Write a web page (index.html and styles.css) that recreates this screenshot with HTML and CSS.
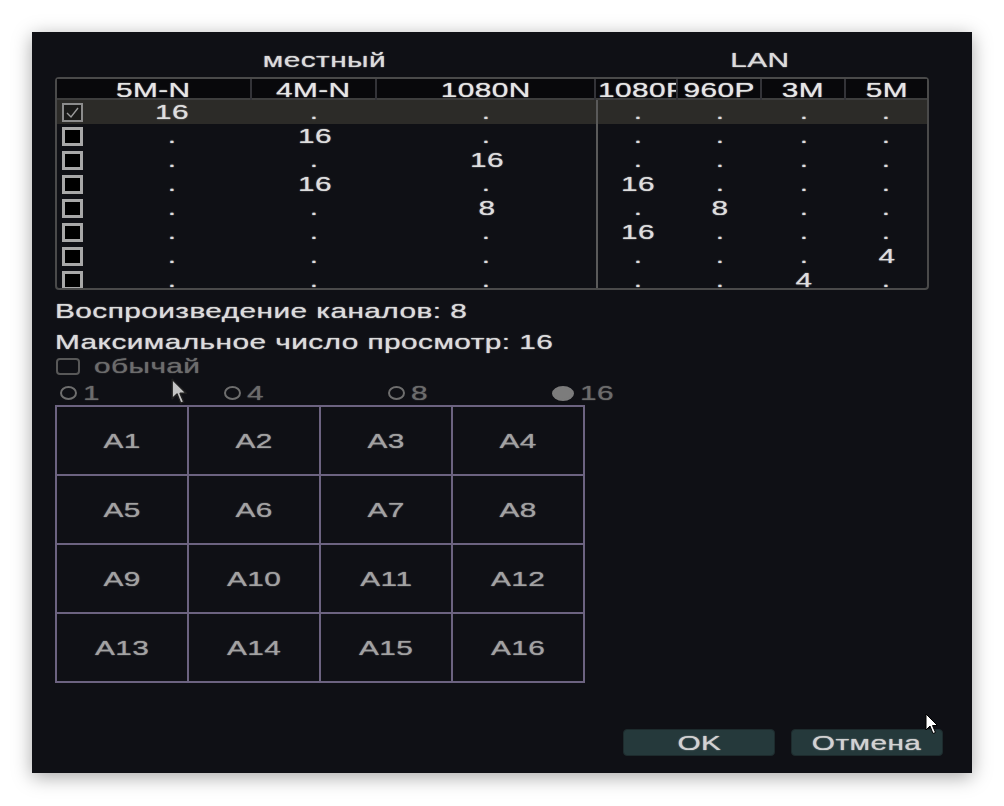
FILE: index.html
```html
<!DOCTYPE html>
<html lang="ru">
<head>
<meta charset="utf-8">
<title>Настройки каналов</title>
<link rel="stylesheet" href="styles.css">
</head>
<body>
<div class="panel">
  <div class="groups">
    <div class="grp grp-local"><span class="s">местный</span></div>
    <div class="grp grp-lan"><span class="s">LAN</span></div>
  </div>

  <div class="table">
    <div class="thead">
      <div class="th"><span class="s">5M-N</span></div>
      <div class="th"><span class="s">4M-N</span></div>
      <div class="th"><span class="s">1080N</span></div>
      <div class="th th-clip"><span class="s sl">1080P</span></div>
      <div class="th"><span class="s">960P</span></div>
      <div class="th"><span class="s">3M</span></div>
      <div class="th th-last"><span class="s">5M</span></div>
    </div>
    <div class="tbody">
      <div class="tr sel">
        <div class="td first"><span class="cb"><svg viewBox="0 0 15 13" width="15" height="13"><polyline points="2,7 6,11 13,2" fill="none" stroke="#9a9a9a" stroke-width="1.4"/></svg></span><span class="v"><span class="s">16</span></span></div>
        <div class="td"><span class="s">.</span></div>
        <div class="td"><span class="s">.</span></div>
        <div class="td lan"><span class="s">.</span></div>
        <div class="td"><span class="s">.</span></div>
        <div class="td"><span class="s">.</span></div>
        <div class="td"><span class="s">.</span></div>
      </div>
      <div class="tr">
        <div class="td first"><span class="cb"></span><span class="v"><span class="s">.</span></span></div>
        <div class="td"><span class="s">16</span></div>
        <div class="td"><span class="s">.</span></div>
        <div class="td lan"><span class="s">.</span></div>
        <div class="td"><span class="s">.</span></div>
        <div class="td"><span class="s">.</span></div>
        <div class="td"><span class="s">.</span></div>
      </div>
      <div class="tr">
        <div class="td first"><span class="cb"></span><span class="v"><span class="s">.</span></span></div>
        <div class="td"><span class="s">.</span></div>
        <div class="td"><span class="s">16</span></div>
        <div class="td lan"><span class="s">.</span></div>
        <div class="td"><span class="s">.</span></div>
        <div class="td"><span class="s">.</span></div>
        <div class="td"><span class="s">.</span></div>
      </div>
      <div class="tr">
        <div class="td first"><span class="cb"></span><span class="v"><span class="s">.</span></span></div>
        <div class="td"><span class="s">16</span></div>
        <div class="td"><span class="s">.</span></div>
        <div class="td lan"><span class="s">16</span></div>
        <div class="td"><span class="s">.</span></div>
        <div class="td"><span class="s">.</span></div>
        <div class="td"><span class="s">.</span></div>
      </div>
      <div class="tr">
        <div class="td first"><span class="cb"></span><span class="v"><span class="s">.</span></span></div>
        <div class="td"><span class="s">.</span></div>
        <div class="td"><span class="s">8</span></div>
        <div class="td lan"><span class="s">.</span></div>
        <div class="td"><span class="s">8</span></div>
        <div class="td"><span class="s">.</span></div>
        <div class="td"><span class="s">.</span></div>
      </div>
      <div class="tr">
        <div class="td first"><span class="cb"></span><span class="v"><span class="s">.</span></span></div>
        <div class="td"><span class="s">.</span></div>
        <div class="td"><span class="s">.</span></div>
        <div class="td lan"><span class="s">16</span></div>
        <div class="td"><span class="s">.</span></div>
        <div class="td"><span class="s">.</span></div>
        <div class="td"><span class="s">.</span></div>
      </div>
      <div class="tr">
        <div class="td first"><span class="cb"></span><span class="v"><span class="s">.</span></span></div>
        <div class="td"><span class="s">.</span></div>
        <div class="td"><span class="s">.</span></div>
        <div class="td lan"><span class="s">.</span></div>
        <div class="td"><span class="s">.</span></div>
        <div class="td"><span class="s">.</span></div>
        <div class="td"><span class="s">4</span></div>
      </div>
      <div class="tr">
        <div class="td first"><span class="cb"></span><span class="v"><span class="s">.</span></span></div>
        <div class="td"><span class="s">.</span></div>
        <div class="td"><span class="s">.</span></div>
        <div class="td lan"><span class="s">.</span></div>
        <div class="td"><span class="s">.</span></div>
        <div class="td"><span class="s">4</span></div>
        <div class="td"><span class="s">.</span></div>
      </div>
    </div>
  </div>

  <div class="line line1"><span class="s sl">Воспроизведение каналов: 8</span></div>
  <div class="line line2"><span class="s sl">Максимальное число просмотр: 16</span></div>
  <div class="line line3 dim"><span class="cb2"></span><span class="s sl">обычай</span></div>

  <div class="radios dim">
    <div class="radio"><span class="rc"></span><span class="s sl">1</span></div>
    <div class="radio"><span class="rc"></span><span class="s sl">4</span></div>
    <div class="radio"><span class="rc"></span><span class="s sl">8</span></div>
    <div class="radio"><span class="rc on"></span><span class="s sl">16</span></div>
  </div>

  <div class="grid">
    <div class="cell"><span class="s">A1</span></div>
    <div class="cell"><span class="s">A2</span></div>
    <div class="cell"><span class="s">A3</span></div>
    <div class="cell"><span class="s">A4</span></div>
    <div class="cell"><span class="s">A5</span></div>
    <div class="cell"><span class="s">A6</span></div>
    <div class="cell"><span class="s">A7</span></div>
    <div class="cell"><span class="s">A8</span></div>
    <div class="cell"><span class="s">A9</span></div>
    <div class="cell"><span class="s">A10</span></div>
    <div class="cell"><span class="s">A11</span></div>
    <div class="cell"><span class="s">A12</span></div>
    <div class="cell"><span class="s">A13</span></div>
    <div class="cell"><span class="s">A14</span></div>
    <div class="cell"><span class="s">A15</span></div>
    <div class="cell"><span class="s">A16</span></div>
  </div>

  <div class="buttons">
    <div class="btn"><span class="s">OK</span></div>
    <div class="btn"><span class="s">Отмена</span></div>
  </div>

  <svg class="cursor cursor1" viewBox="0 0 14 22" width="19" height="27"><path d="M1,1 L1,17 L5,13 L8,20.5 L10.5,19.5 L7.5,12.5 L12.5,12.5 Z" fill="#c4c4c4" stroke="#202020" stroke-width="1.2" stroke-linejoin="round"/></svg>
  <svg class="cursor cursor2" viewBox="0 0 14 22" width="14" height="22"><path d="M1,1 L1,17 L5,13 L8,20.5 L10.5,19.5 L7.5,12.5 L12.5,12.5 Z" fill="#ffffff" stroke="#000000" stroke-width="1"/></svg>
</div>
</body>
</html>
```

FILE: styles.css
```css
* { box-sizing: border-box; }

html, body {
  margin: 0;
  padding: 0;
  background: #ffffff;
}

body {
  width: 1004px;
  height: 806px;
  overflow: hidden;
  font-family: "Liberation Sans", Arial, sans-serif;
  font-size: 21px;
  line-height: 24px;
  color: #e2e2e2;
}

.panel {
  position: relative;
  margin: 32px 0 0 32px;
  width: 940px;
  height: 741px;
  background: #0f1015;
  box-shadow: 0 4px 18px rgba(0, 0, 0, 0.35);
  padding: 16px 0 0 23px;
}

/* horizontally stretched DVR text */
.s {
  display: inline-block;
  transform: scaleX(1.42);
  letter-spacing: 0.3px;
  white-space: nowrap;
  text-shadow: 0 0 1px currentColor;
}
.sl { transform-origin: 0 50%; }

/* group titles */
.groups {
  display: grid;
  grid-template-columns: 539px 331px;
  height: 24px;
  color: #dcdcdc;
}
.grp { text-align: center; }

/* table */
.table {
  margin-top: 5px;
  width: 874px;
  border: 2px solid #4a4a4a;
  border-radius: 4px;
}

.thead, .tr {
  display: grid;
  grid-template-columns: 195px 125px 219px 82px 84px 84px 81px;
}

.thead {
  height: 21px;
  border-bottom: 2px solid #3e3e3e;
  background: #08080b;
}

.th {
  text-align: center;
  line-height: 21px;
  border-right: 2px solid #333338;
  color: #e6e6e6;
}
.th-last { border-right: none; }
.th-clip {
  text-align: left;
  padding-left: 2px;
  overflow-x: clip;
  overflow-y: visible;
}

.tbody {
  height: 188px;
  overflow: hidden;
}

.tr {
  height: 24px;
}
.tr.sel { background: #2c2b28; }

.td {
  text-align: center;
  line-height: 24px;
  color: #dedede;
}
.td.lan { border-left: 2px solid #5a5a5a; }

.td.first {
  display: flex;
  align-items: center;
  padding-left: 5px;
}
.td.first .v {
  flex: 1;
  text-align: center;
  padding-left: 9px;
}

.cb {
  display: flex;
  align-items: center;
  justify-content: center;
  flex-shrink: 0;
  width: 21px;
  height: 19px;
  border: 3px solid #a8a8a8;
  background: #000000;
}
.sel .cb { border-width: 2px; border-color: #8c8c8c; background: #1a1a18; }

/* info lines */
.line {
  height: 24px;
  color: #dcdcdc;
}
.line1 { margin-top: 9px; }
.line2 { margin-top: 7px; }
.line3 {
  display: flex;
  align-items: center;
  gap: 14px;
  padding-left: 1px;
}
.dim { color: #6c6c6c; }

.cb2 {
  flex-shrink: 0;
  width: 24px;
  height: 17px;
  border: 2px solid #585858;
  border-radius: 4px;
}

/* radios */
.radios {
  margin-top: 3px;
  display: flex;
  height: 24px;
  padding-left: 5px;
}
.radio {
  width: 164px;
  display: flex;
  align-items: center;
  gap: 6px;
}
.rc {
  flex-shrink: 0;
  width: 17px;
  height: 14px;
  border: 2px solid #6e6e6e;
  border-radius: 50%;
}
.rc.on {
  width: 22px;
  height: 15px;
  background: #7c7c7c;
  border-color: #7c7c7c;
}

/* 4x4 layout grid */
.grid {
  width: 530px;
  height: 278px;
  display: grid;
  grid-template-columns: repeat(4, 1fr);
  grid-template-rows: repeat(4, 1fr);
  gap: 2px;
  padding: 2px;
  background: #6c6380;
}
.cell {
  background: #0f1015;
  display: flex;
  align-items: center;
  justify-content: center;
  color: #a2a2a2;
}

/* buttons */
.buttons {
  margin-top: 46px;
  display: flex;
  justify-content: flex-end;
  gap: 16px;
  padding-right: 29px;
}
.btn {
  width: 152px;
  height: 27px;
  border-radius: 4px;
  background: #25393b;
  border: 1px solid #1d2b2d;
  color: #d2d2d2;
  text-align: center;
  line-height: 25px;
}

/* mouse cursors */
.cursor { position: absolute; }
.cursor1 { left: 138px; top: 346px; }
.cursor2 { left: 893px; top: 681px; }
```
